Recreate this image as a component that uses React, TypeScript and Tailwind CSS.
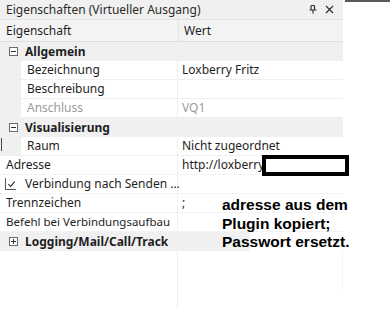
const font = { fontFamily: '"Noto Sans", "Open Sans", sans-serif' }

function Box({ plus }: { plus?: boolean }) {
  return (
    <span className="relative inline-block w-[9px] h-[9px] border border-[#6b6b6b] bg-white shrink-0">
      <span className="absolute left-[1px] right-[1px] top-[3px] h-px bg-[#333]" />
      {plus && <span className="absolute top-[1px] bottom-[1px] left-[3px] w-px bg-[#333]" />}
    </span>
  )
}

function Group({ label, plus, width }: { label: string; plus?: boolean; width?: string }) {
  return (
    <div className={`flex items-center h-[19px] bg-[#f0f0f0] ${width ?? 'w-full'}`}>
      <div className="w-[25px] flex justify-center pl-[1px]"><Box plus={plus} /></div>
      <span className="font-bold text-[#1e1e1e]">{label}</span>
    </div>
  )
}

function Prop({ name, value, muted }: { name: string; value?: string; muted?: boolean }) {
  const c = muted ? 'text-[#9b9b9b]' : 'text-[#1e1e1e]'
  return (
    <div className="flex h-[19px]">
      <div className="w-[21px] bg-[#f0f0f0]" />
      <div className="flex flex-1 bg-white border-b border-[#efefef]">
        <div className={`w-[157px] pl-[6px] leading-[18px] border-r border-[#efefef] ${c}`}>{name}</div>
        <div className={`flex-1 pl-[4px] leading-[18px] ${c}`}>{value}</div>
      </div>
    </div>
  )
}

function Flat({ name, value, check, small }: { name: string; value?: string; check?: boolean; small?: boolean }) {
  return (
    <div className="flex h-[19px] bg-white border-b border-[#f3f3f3]">
      <div className={`w-[178px] flex items-center border-r border-[#f0f0f0] ${check ? 'pl-[5px]' : 'pl-[6px]'}`}>
        {check && (
          <span className="relative w-[11px] h-[12px] border-l border-b border-[#555] mr-[9px] shrink-0">
            <svg viewBox="0 0 10 10" className="absolute left-[1px] top-[2px] w-[9px] h-[8px]">
              <path d="M1 5 L4 8 L9 2" fill="none" stroke="#222" strokeWidth="1.3" />
            </svg>
          </span>
        )}
        <span className={`text-[#1e1e1e] whitespace-nowrap ${small ? 'text-[11.5px]' : ''}`}>{name}</span>
      </div>
      <div className="flex-1 pl-[4px] leading-[18px] text-[#1e1e1e]">{value}</div>
    </div>
  )
}

export default function App() {
  return (
    <div className="relative w-[390px] h-[309px] bg-white overflow-hidden text-[12px]" style={font}>
      <div className="absolute right-0 top-0 w-[45px] h-[2px] bg-[#5a5a5a]" />
      <div className="w-[343px] flex flex-col">
        <div className="flex items-center justify-between h-[20px] bg-[#f0f0f0] border-b border-[#e2e2e2] pl-[6px] pr-[9px]">
          <span className="text-[#2a2a2a]">Eigenschaften (Virtueller Ausgang)</span>
          <div className="flex items-center gap-[8px]">
            <svg viewBox="0 0 8 9" className="w-[8px] h-[9px]">
              <path d="M2 0.5 V5 M5.5 0.5 V5 M2 0.5 H5.5 M0.5 5 H7.5 M4 5 V8.5" fill="none" stroke="#333" strokeWidth="1.2" />
            </svg>
            <svg viewBox="0 0 9 9" className="w-[9px] h-[9px]">
              <path d="M1 1 L8 8 M8 1 L1 8" fill="none" stroke="#333" strokeWidth="1.3" />
            </svg>
          </div>
        </div>
        <div className="flex h-[22px] bg-[#f3f3f3] border-b border-[#dedede]">
          <div className="w-[179px] pl-[6px] leading-[21px] border-r border-[#e4e4e4] text-[#1e1e1e]">Eigenschaft</div>
          <div className="flex-1 pl-[5px] leading-[21px] text-[#1e1e1e]">Wert</div>
        </div>
        <Group label="Allgemein" />
        <Prop name="Bezeichnung" value="Loxberry Fritz" />
        <Prop name="Beschreibung" />
        <Prop name="Anschluss" value="VQ1" muted />
        <Group label="Visualisierung" />
        <div className="relative">
          <div className="absolute left-[1px] top-[1px] w-px h-[13px] bg-[#444]" />
          <Prop name="Raum" value="Nicht zugeordnet" />
        </div>
        <Flat name="Adresse" value="http://loxberry" />
        <Flat name="Verbindung nach Senden ..." check />
        <Flat name="Trennzeichen" value=";" />
        <Flat name="Befehl bei Verbindungsaufbau" small />
        <Group label="Logging/Mail/Call/Track" plus width="w-[250px]" />
        <div className="flex h-[59px]">
          <div className="w-[178px] border-r border-[#f0f0f0]" />
          <div className="flex-1 border-r border-[#f3f3f3] mb-[19px]" />
        </div>
      </div>

      <div className="absolute left-[262px] top-[155px] w-[87px] h-[21px] border-[4px] border-black bg-white" />
      <div
        className="absolute left-[222px] top-[196px] text-[15.5px] font-bold leading-[18.5px] text-black"
        style={{ fontFamily: '"Liberation Sans", Arial, sans-serif' }}
      >
        adresse aus dem<br />Plugin kopiert;<br />Passwort ersetzt.
      </div>
    </div>
  )
}
